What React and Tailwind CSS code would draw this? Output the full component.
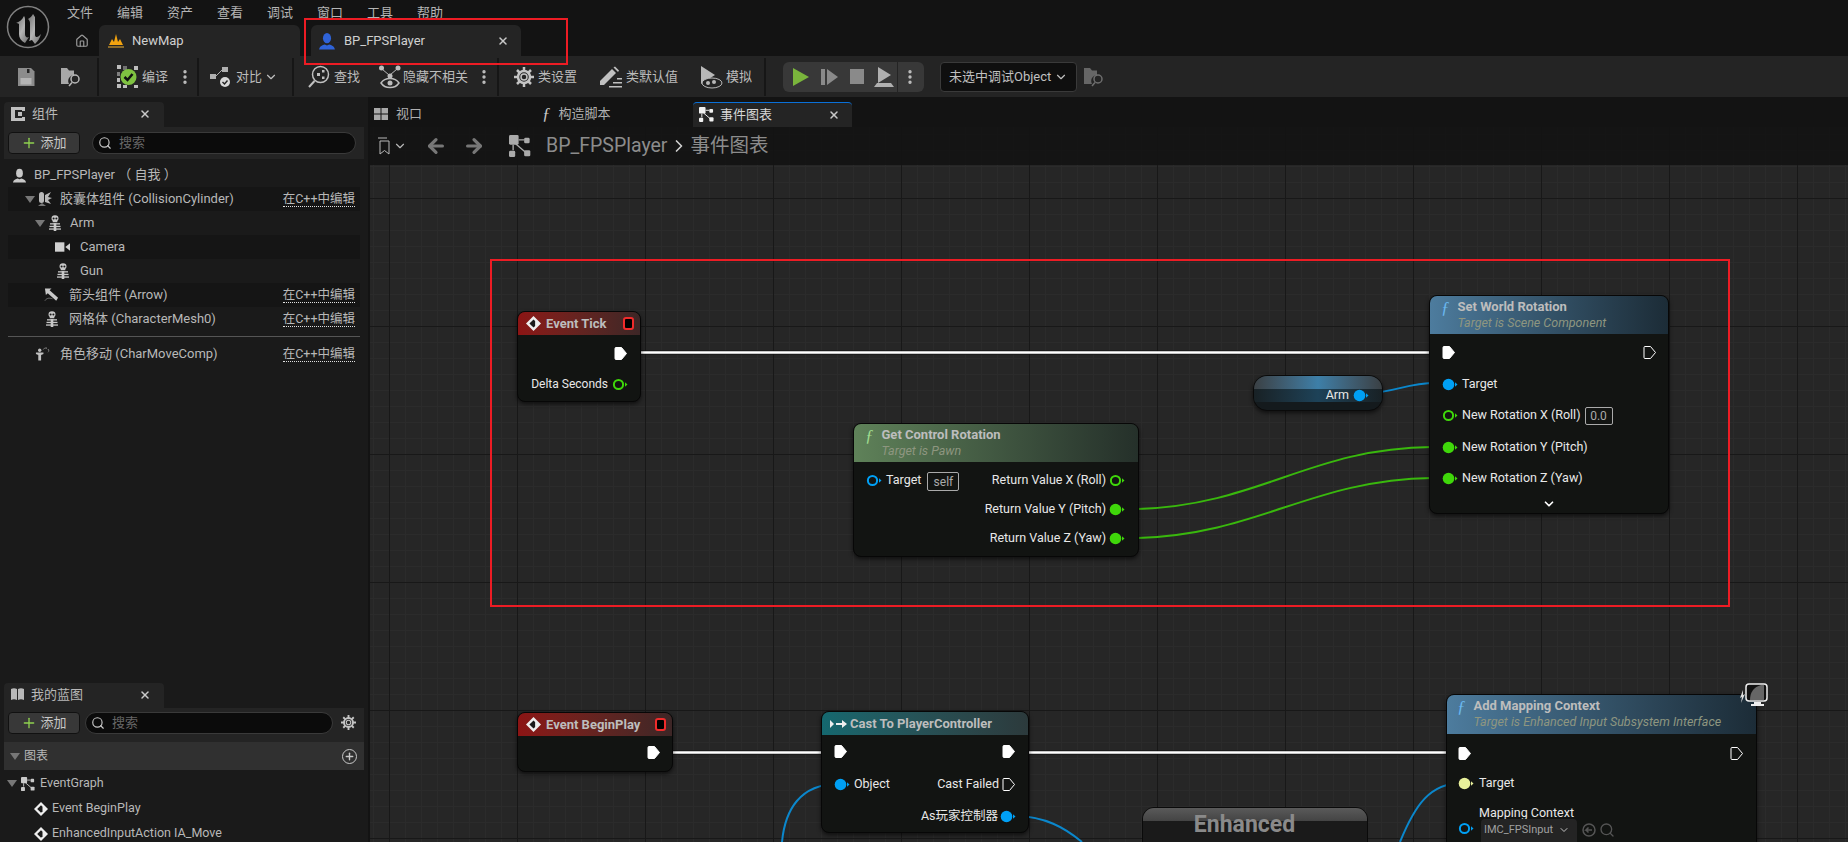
import React from 'react';
import { Plus, Search, X, ChevronDown, ChevronRight, Home, EllipsisVertical, ArrowLeft, ArrowRight } from 'lucide-react';

const Person = ({ color = '#c8c8c8', size = 16 }) => (
  <svg width={size} height={size} viewBox="0 0 16 16" fill={color}>
    <ellipse cx="8" cy="5.5" rx="3.6" ry="4.6" />
    <path d="M1 15.5c.5-3 3-4 5-4.4l2 1 2-1c2 .4 4.500 1.400 5 4.400z" />
  </svg>
);

const Skeleton = () => (
  <svg width="14" height="16" viewBox="0 0 14 16" fill="#c8c8c8">
    <path d="M3.500 3.500a3.500 3.200 0 0 1 7 0c0 1.300-.6 2-1.200 2.500v1.200H4.700V6c-.6-.5-1.200-1.200-1.200-2.500z" />
    <rect x="5.700" y="8" width="2.600" height="8" />
    <rect x="2" y="8.200" width="10" height="1.300" />
    <rect x="1.500" y="10.800" width="11" height="1.300" />
    <rect x="1" y="13.400" width="12" height="1.300" />
    <circle cx="5.600" cy="3.600" r="1" fill="#1a1a1a" />
    <circle cx="8.400" cy="3.600" r="1" fill="#1a1a1a" />
  </svg>
);

const GraphIcon = ({ size = 16, color = '#c8c8c8' }) => (
  <svg width={size} height={size} viewBox="0 0 16 16" fill={color}>
    <rect x="0" y="0" width="7" height="7" rx="1" />
    <rect x="11" y="2" width="4" height="4" rx="1" />
    <rect x="0" y="11.500" width="4.500" height="4.500" rx="1" />
    <rect x="11" y="11" width="4.500" height="4.500" rx="1" />
    <path d="M7 3.500h4M5 6.500l7 6M3 7v4" stroke={color} strokeWidth="1" />
  </svg>
);

const Diamond = ({ size = 14 }) => (
  <svg width={size} height={size} viewBox="0 0 14 14">
    <path d="M7 0l7 7-7 7-7-7z" fill="#eee" />
    <path d="M7 3.200L3.200 7 7 10.800l1.500-1.500V4.700z" fill="#1a1a1a" />
  </svg>
);

const Fn = ({ color }) => (
  <span className="text-[17px] italic font-['Liberation_Serif',serif] leading-none" style={{ color }}>
    ƒ
  </span>
);

const Exec = ({ filled = true }) => (
  <svg width="14" height="15" viewBox="0 0 14 15">
    <path
      d="M2 1.500h5.500L12.500 7.500l-5 6H2a1 1 0 0 1-1-1v-10a1 1 0 0 1 1-1z"
      fill={filled ? '#fff' : 'none'}
      stroke="#fff"
      strokeWidth="1"
    />
  </svg>
);

const Pin = ({ color, filled = true }) => (
  <svg width="16" height="13" viewBox="0 0 16 13" className="shrink-0">
    <circle cx="6.500" cy="6.500" r={filled ? 5.800 : 4.600} fill={filled ? color : 'none'} stroke={color} strokeWidth={filled ? 0 : 2} />
    <path d="M13 4.300L15.500 6.500 13 8.700z" fill={color} />
  </svg>
);

const Sep = () => <div className="w-0.5 h-[38px] bg-[#161616] shrink-0" />;

const Dots = () => <EllipsisVertical size={18} className="text-[#c0c0c0] shrink-0" strokeWidth={2.5} />;

const Label = ({ children, className = '' }) => (
  <span className={`text-[13px] text-[#bcbcbc] whitespace-nowrap ${className}`}>{children}</span>
);

const SaveIcon = () => (
  <svg width="20" height="20" viewBox="0 0 20 20" fill="#8c8c8c">
    <path d="M2 1h13l3.500 3.500V19H2z" />
    <rect x="11" y="2" width="2.500" height="4" fill="#242424" />
    <rect x="4.500" y="11" width="11" height="6.500" fill="#b4b4b4" />
  </svg>
);

const BrowseIcon = ({ dim }) => (
  <svg width="22" height="22" viewBox="0 0 22 22" className={dim ? 'opacity-50' : ''}>
    <path d="M1 2h6l2 2.500h5V9a6 6 0 0 0-5 9H1z" fill="#a8a8a8" />
    <circle cx="15" cy="13" r="4" fill="none" stroke="#b8b8b8" strokeWidth="1.500" />
    <path d="M12 16.500L9 20" stroke="#b8b8b8" strokeWidth="1.500" />
  </svg>
);

const CompileIcon = () => (
  <svg width="22" height="24" viewBox="0 0 22 24">
    <g fill="#bdbdbd">
      <rect x="0" y="0" width="4" height="4" />
      <rect x="6" y="1" width="4" height="4" fillOpacity="0.5" />
      <rect x="17" y="1" width="4" height="4" />
      <rect x="0" y="7" width="3" height="4" fillOpacity="0.6" />
      <rect x="0" y="13" width="3" height="4" />
      <rect x="0" y="19" width="4" height="4" />
      <rect x="6" y="20" width="4" height="3" />
      <rect x="17" y="20" width="4" height="3" />
    </g>
    <circle cx="11.500" cy="12" r="8" fill="#7fc241" />
    <path d="M7.500 12l3 3 5-6" stroke="#111" strokeWidth="2.500" fill="none" />
  </svg>
);

const DiffIcon = () => (
  <svg width="22" height="22" viewBox="0 0 22 22" fill="#b0b0b0">
    <rect x="0" y="8" width="6" height="5" />
    <rect x="12" y="1" width="6" height="5" />
    <path d="M6 10l6-6" stroke="#b0b0b0" />
    <circle cx="15" cy="16" r="5" fill="#d8d8d8" />
    <path d="M12.500 16l2 2 3-3.500" stroke="#222" strokeWidth="1.400" fill="none" />
  </svg>
);

const FindIcon = () => (
  <svg width="22" height="24" viewBox="0 0 22 24" fill="none" stroke="#c0c0c0" strokeWidth="1.500">
    <circle cx="12.500" cy="9.500" r="8" />
    <path d="M6.500 16L1 22" strokeWidth="2" />
    <rect x="9" y="8" width="3" height="3" fill="#c0c0c0" stroke="none" />
    <rect x="14" y="5" width="2.500" height="2.500" fill="#c0c0c0" stroke="none" />
    <rect x="14" y="11.500" width="2.500" height="2.500" fill="#c0c0c0" stroke="none" />
  </svg>
);

const HideIcon = () => (
  <svg width="22" height="24" viewBox="0 0 22 24" fill="#bdbdbd">
    <circle cx="2.500" cy="3" r="2.500" />
    <circle cx="19" cy="3" r="2.500" />
    <path d="M3 4l7 6M18 4l-7 6M11 10v3" stroke="#bdbdbd" fill="none" />
    <circle cx="11" cy="11" r="2.500" />
    <path d="M2 18c4-6 14-6 18 0-4 6-14 6-18 0z" fill="none" stroke="#bdbdbd" strokeWidth="1.500" />
    <circle cx="11" cy="18" r="2.500" />
  </svg>
);

const GearIcon = ({ size = 20 }) => (
  <svg width={size} height={size} viewBox="0 0 20 20" fill="none" stroke="#c4c4c4">
    <circle cx="10" cy="10" r="6" strokeWidth="2.500" />
    <circle cx="10" cy="10" r="3" strokeWidth="1.500" />
    <path
      d="M10 0v4M10 16v4M0 10h4M16 10h4M3 3l2.500 2.500M14.500 14.500L17 17M17 3l-2.500 2.500M5.500 14.500L3 17"
      strokeWidth="2.500"
    />
  </svg>
);

const PencilIcon = () => (
  <svg width="24" height="22" viewBox="0 0 24 22" fill="#c0c0c0">
    <path d="M1 15L13 3l4 4L5 19H1z" />
    <path d="M14.500 1.500l1.500-1 4 4-1 1.500z" />
    <path d="M10 20h13v1.500H10zM14 16h9v1.500h-9zM18 12h5v1.500h-5z" />
  </svg>
);

const SimIcon = () => (
  <svg width="24" height="24" viewBox="0 0 24 24" fill="#b8b8b8">
    <path d="M2 1l14 9-14 9z" />
    <ellipse cx="13" cy="18" rx="10" ry="5" fill="#242424" stroke="#b8b8b8" />
    <circle cx="9" cy="18" r="2" />
    <circle cx="15" cy="17" r="2" />
  </svg>
);

const UeLogo = () => (
  <svg width="44" height="44" viewBox="0 0 44 44">
    <defs>
      <linearGradient id="ue" x1="0" y1="0" x2="1" y2="1">
        <stop offset="0" stopColor="#6e6e6e" />
        <stop offset="0.5" stopColor="#b4b4b4" />
        <stop offset="1" stopColor="#6a6a6a" />
      </linearGradient>
    </defs>
    <circle cx="22" cy="22" r="20.500" fill="#0f0f0f" stroke="#808080" strokeWidth="1.500" />
    <path
      d="M10 18c3-1 6-3 8-7 1 1 1 3 1 5v13c0 3 2 4 4 3l-4 6c-4-2-6-5-6-9V19c-1-1-2-1-3-1z"
      fill="url(#ue)"
    />
    <path
      d="M22 14c2-1 4-3 5-5 1 1 1 2 2 3v18c0 2 2 3 4 1l2-2c-1 4-3 7-6 10l-3-4-3 1c1-1 1-3 1-5V18c0-2-1-3-2-4z"
      fill="url(#ue)"
    />
  </svg>
);

const ArrowIcon = () => (
  <svg width="16" height="14" viewBox="0 0 16 14" fill="#c8c8c8">
    <path d="M1 0h7L6 2l9 8-2 3-9-8-2 2z" />
    <path d="M1 13c2-3 5-3 8-2" stroke="#777" fill="none" />
  </svg>
);

const CapsuleIcon = () => (
  <svg width="15" height="16" viewBox="0 0 15 16" fill="#b8b8b8">
    <rect x="2" y="1" width="5" height="11" rx="2.500" />
    <path d="M8 4l6-3-3 5 4 1-4 2 3 4-6-2z" />
    <path d="M1 15l4-3 4 3z" fill="#777" />
  </svg>
);

const CamIcon = () => (
  <svg width="16" height="10" viewBox="0 0 16 10" fill="#d0d0d0">
    <rect x="0" y="0" width="10" height="10" />
    <path d="M11 5l5-4v8z" />
  </svg>
);

const MoveIcon = () => (
  <svg width="16" height="16" viewBox="0 0 16 16" fill="#c0c0c0">
    <circle cx="5" cy="4" r="1.800" />
    <path d="M1 6.500h8v1.500L6.500 9v6h-3V9L1 8z" />
    <path d="M9 3a3 3 0 0 1 4-1M14 3a2 2 0 0 1 0 3" stroke="#c0c0c0" strokeDasharray="1.500 1" fill="none" />
  </svg>
);

const tree = [
  { x: 'pl-[4px]', gap: 'ml-[7px]', icon: <Person size={15} />, text: 'BP_FPSPlayer （ 自我 ）' },
  { x: 'pl-[17px]', gap: 'ml-[8px]', caret: true, icon: <CapsuleIcon />, text: '胶囊体组件 (CollisionCylinder)', edit: true, dark: true },
  { x: 'pl-[27px]', gap: 'ml-[8px]', caret: true, icon: <Skeleton />, text: 'Arm' },
  { x: 'pl-[47px]', icon: <CamIcon />, text: 'Camera', dark: true },
  { x: 'pl-[47px]', icon: <Skeleton />, text: 'Gun' },
  { x: 'pl-[36px]', icon: <ArrowIcon />, text: '箭头组件 (Arrow)', edit: true, dark: true },
  { x: 'pl-[36px]', icon: <Skeleton />, text: '网格体 (CharacterMesh0)', edit: true },
];

const Caret = () => (
  <svg width="10" height="7" viewBox="0 0 10 7" className="shrink-0">
    <path d="M0 0h10L5 7z" fill="#777" />
  </svg>
);

const TreeRow = ({ row }) => (
  <div className={`h-[24px] flex items-center ${row.x} pr-[5px] ${row.dark ? 'bg-[#151515]' : ''}`}>
    {row.caret && (
      <span className="mr-[2px]">
        <Caret />
      </span>
    )}
    <span className="w-[15px] flex justify-center shrink-0">{row.icon}</span>
    <span className={`${row.gap || 'ml-[10px]'} text-[13px] text-[#b8b8b8] whitespace-nowrap`}>{row.text}</span>
    {row.edit && (
      <span className="ml-auto text-[12.500px] text-[#b8b8b8] border-b border-dotted border-[#e0e0e0] leading-[15px]">
        在C++中编辑
      </span>
    )}
  </div>
);

const AddButton = () => (
  <div className="w-[72px] h-[22px] bg-[#383838] border border-[#111] rounded flex items-center justify-center gap-[3px] shrink-0">
    <Plus size={16} className="text-[#8fd14f]" strokeWidth={2} />
    <span className="text-[13px] text-[#c8c8c8]">添加</span>
  </div>
);

const SearchBox = ({ className }) => (
  <div className={`h-[22px] bg-[#0b0b0b] border border-[#3a3a3a] rounded-full flex items-center pl-[5px] gap-[7px] ${className}`}>
    <Search size={14} className="text-[#c8c8c8]" />
    <span className="text-[13px] text-[#666]">搜索</span>
  </div>
);

const PanelTab = ({ icon, title }) => (
  <div className="w-[160px] h-[25px] ml-[4px] pb-[2px] bg-[#242424] rounded-t flex items-center pl-[6px] pr-[13px] gap-[6px] shrink-0">
    {icon}
    <span className="text-[13px] text-[#b8b8b8]">{title}</span>
    <X size={12} className="ml-auto text-[#c8c8c8]" strokeWidth={3} />
  </div>
);

const NodeTitle = ({ children }) => <div className="text-[13px] font-bold text-[#bdbdbd] leading-[16px] whitespace-nowrap">{children}</div>;

const NodeSub = ({ children }) => <div className="text-[12.500px] italic text-[#8e9680] leading-[16px] whitespace-nowrap">{children}</div>;

const NodeText = ({ children, className = '' }) => <span className={`text-[12.500px] text-[#e8e8e8] whitespace-nowrap ${className}`}>{children}</span>;

const nodeBox = 'absolute bg-[#121412] border border-[#070707] rounded-lg shadow-[0_2px_4px_rgba(0,0,0,0.6)] overflow-hidden';

const GREEN = '#3fd70a';
const BLUE = '#00a0f5';

const EventNode = ({ className, title }) => (
  <div className={`${nodeBox} ${className}`}>
    <div className="h-[23px] bg-linear-to-r from-[#8c1414] to-[#3d2626] flex items-center pl-[8px] pr-[6px] gap-[5px]">
      <Diamond size={15} />
      <NodeTitle>{title}</NodeTitle>
      <span className="ml-auto w-[11px] h-[13px] bg-black border-2 border-[#f02b2b] rounded-[3px]" />
    </div>
  </div>
);

export default function App() {
  return (
    <div className="relative w-[1848px] h-[842px] overflow-hidden bg-[#131313] font-['Roboto','Noto_Sans_CJK_SC',sans-serif] flex flex-col">
      {/* title bar */}
      <div className="h-[56px] flex shrink-0">
        <div className="w-[49px] pl-[6px] pt-[5px] shrink-0">
          <UeLogo />
        </div>
        <div className="flex-1 flex flex-col">
          <div className="h-[25px] flex items-center pl-[18px] gap-[24px] text-[13px] text-[#b4b4b4]">
            {['文件', '编辑', '资产', '查看', '调试', '窗口', '工具', '帮助'].map((m) => (
              <span key={m}>{m}</span>
            ))}
          </div>
          <div className="h-[31px] flex items-stretch">
            <div className="w-[50px] flex items-center justify-center">
              <Home size={14} className="text-[#9a9a9a] ml-[15px]" />
            </div>
            <div className="w-[201px] bg-[#242424] rounded-t-md flex items-center pl-[8px] gap-[7px]">
              <svg width="18" height="16" viewBox="0 0 18 16">
                <path d="M2 12l3-6 2 3 2-8 2 8 2-3 3 6z" fill="#f2a30f" />
                <rect x="1" y="13" width="16" height="2" fill="#8a6a2a" />
              </svg>
              <span className="text-[13px] text-[#d0d0d0]">NewMap</span>
            </div>
            <div className="w-[210px] ml-[11px] bg-[#242424] rounded-t-md flex items-center pl-[7px] pr-[12px] gap-[8px]">
              <Person color="#2f63d8" size={18} />
              <span className="text-[13px] text-[#d0d0d0]">BP_FPSPlayer</span>
              <X size={12} className="ml-auto text-[#c8c8c8]" strokeWidth={3} />
            </div>
          </div>
        </div>
      </div>

      {/* toolbar */}
      <div className="h-[41px] bg-[#242424] flex items-center shrink-0">
        <div className="w-[97px] pl-[16px] flex items-center gap-[24px] shrink-0">
          <SaveIcon />
          <BrowseIcon />
        </div>
        <Sep />
        <div className="w-[98px] pl-[18px] flex items-center gap-[3px] shrink-0">
          <CompileIcon />
          <Label>编译</Label>
          <span className="ml-[5px]">
            <Dots />
          </span>
        </div>
        <Sep />
        <div className="w-[93px] pl-[11px] flex items-center gap-[4px] shrink-0">
          <DiffIcon />
          <Label>对比</Label>
          <ChevronDown size={14} className="text-[#c0c0c0] -ml-[2px]" />
        </div>
        <Sep />
        <div className="w-[203px] pl-[14px] flex items-center shrink-0">
          <FindIcon />
          <Label className="ml-[4px]">查找</Label>
          <span className="ml-[19px]">
            <HideIcon />
          </span>
          <Label className="ml-[2px]">隐藏不相关</Label>
          <span className="ml-[7px]">
            <Dots />
          </span>
        </div>
        <Sep />
        <div className="w-[265px] pl-[15px] flex items-center shrink-0">
          <GearIcon />
          <Label className="ml-[4px]">类设置</Label>
          <span className="ml-[22px]">
            <PencilIcon />
          </span>
          <Label className="ml-[3px]">类默认值</Label>
          <span className="ml-[21px]">
            <SimIcon />
          </span>
          <Label className="ml-[3px]">模拟</Label>
        </div>
        <Sep />
        <div className="ml-[17px] w-[141px] h-[30px] bg-[#383838] rounded-md flex items-center pl-[9px] shrink-0">
          <svg width="18" height="18" viewBox="0 0 18 18">
            <path d="M1 0l16 9-16 9z" fill="#7ab53c" />
          </svg>
          <svg width="18" height="16" viewBox="0 0 18 16" className="ml-[11px]" fill="#8a8a8a">
            <rect x="0" y="0" width="4" height="16" />
            <path d="M6 0l11 8-11 8z" />
          </svg>
          <span className="ml-[11px] w-[14px] h-[15px] bg-[#8a8a8a]" />
          <svg width="20" height="20" viewBox="0 0 20 20" className="ml-[10px]" fill="#b0b0b0">
            <path d="M4 0l13 8-13 8z" />
            <path d="M0 20l3-4h14l3 4z" />
          </svg>
          <div className="ml-[3px] w-px h-[30px] bg-[#242424]" />
          <span className="ml-[3px]">
            <Dots />
          </span>
        </div>
        <div className="ml-[16px] w-[137px] h-[30px] bg-[#0f0f0f] border border-[#3a3a3a] rounded flex items-center pl-[8px] gap-[3px] shrink-0">
          <span className="text-[13px] text-[#c0c0c0] whitespace-nowrap">未选中调试Object</span>
          <ChevronDown size={14} className="text-[#c0c0c0]" />
        </div>
        <span className="ml-[6px]">
          <BrowseIcon dim />
        </span>
      </div>

      <div className="flex-1 flex min-h-0">
        {/* left column */}
        <div className="w-[368px] shrink-0 flex flex-col pt-[5px] bg-[#1a1a1a]">
          <PanelTab
            title="组件"
            icon={
              <svg width="16" height="16" viewBox="0 0 16 16" fill="#c0c0c0">
                <path d="M1 1h14v4h-3V4H5v8h7v-1h3v4H1z" />
                <rect x="8" y="6" width="4" height="4" />
              </svg>
            }
          />
          <div className="ml-[4px] mr-[4px] h-[32px] bg-[#242424] flex items-center pl-[4px] gap-[12px] shrink-0">
            <AddButton />
            <SearchBox className="w-[264px]" />
          </div>
          <div className="h-[524px] mx-[8px] pt-[4px] shrink-0 overflow-hidden">
            {tree.map((row) => (
              <TreeRow key={row.text} row={row} />
            ))}
            <div className="h-px bg-[#555] my-[5px]" />
            <TreeRow
              row={{ x: 'pl-[27px]', icon: <MoveIcon />, text: '角色移动 (CharMoveComp)', edit: true }}
            />
          </div>
          <PanelTab
            title="我的蓝图"
            icon={
              <svg width="15" height="14" viewBox="0 0 15 14" fill="#b8b8b8">
                <path d="M1 1c2-1 4-1 6 0v11c-2-1-4-1-6 0zM8 1c2-1 4-1 6 0v11c-2-1-4-1-6 0z" />
              </svg>
            }
          />
          <div className="mx-[4px] h-[34px] bg-[#242424] flex items-start pt-[4px] pl-[4px] gap-[5px] shrink-0">
            <AddButton />
            <SearchBox className="w-[248px]" />
            <span className="ml-[3px] mt-[3px]">
              <GearIcon size={15} />
            </span>
          </div>
          <div className="mx-[4px] h-[28px] bg-[#303030] flex items-center pl-[6px] pr-[7px] gap-[4px] shrink-0">
            <Caret />
            <span className="text-[12px] text-[#b8b8b8]">图表</span>
            <span className="ml-auto w-[15px] h-[15px] border border-[#c8c8c8] rounded-full flex items-center justify-center">
              <Plus size={11} className="text-[#c8c8c8]" strokeWidth={3} />
            </span>
          </div>
          <div className="mx-[4px] pt-[1px]">
            <div className="h-[25px] flex items-center pl-[3px] gap-[4px]">
              <Caret />
              <GraphIcon size={14} />
              <span className="ml-[1px] text-[12.500px] text-[#b8b8b8]">EventGraph</span>
            </div>
            {['Event BeginPlay', 'EnhancedInputAction IA_Move'].map((t) => (
              <div key={t} className="h-[25px] flex items-center pl-[30px] gap-[4px]">
                <Diamond size={14} />
                <span className="text-[12.500px] text-[#b8b8b8] whitespace-nowrap">{t}</span>
              </div>
            ))}
          </div>
        </div>

        {/* right column */}
        <div className="flex-1 flex flex-col min-w-0 ml-[2px]">
          <div className="h-[30px] pt-[5px] flex items-stretch shrink-0 bg-[#131313]">
            <div className="w-[137px] flex items-center pl-[4px] pb-[2px] gap-[8px]">
              <svg width="14" height="12" viewBox="0 0 14 12" fill="#a8a8a8">
                <rect x="0" y="0" width="6.500" height="5.500" />
                <rect x="7.500" y="0" width="6.500" height="5.500" />
                <rect x="0" y="6.500" width="6.500" height="5.500" />
                <rect x="7.500" y="6.500" width="6.500" height="5.500" />
              </svg>
              <span className="text-[13px] text-[#b0b0b0]">视口</span>
            </div>
            <div className="w-[186px] flex items-center pl-[35px] pb-[2px] gap-[8px]">
              <Fn color="#c8c8c8" />
              <span className="text-[13px] text-[#b0b0b0]">构造脚本</span>
            </div>
            <div className="w-[159px] bg-[#242424] border-t border-[#0a70d8] rounded-t flex items-center pl-[6px] pr-[12px] pb-[1px] gap-[6px]">
              <GraphIcon size={15} color="#f0f0f0" />
              <span className="text-[13px] text-[#d8d8d8]">事件图表</span>
              <X size={12} className="ml-auto text-[#c8c8c8]" strokeWidth={3} />
            </div>
          </div>

          {/* graph canvas, nodes sit on it at their own coordinates */}
          <div className="relative flex-1 overflow-hidden bg-[#262626]">
            <svg className="absolute left-0 top-0" width="1478" height="715" viewBox="370 127 1478 715">
              <defs>
                <pattern id="minor" x="5" y="6" width="16" height="16" patternUnits="userSpaceOnUse">
                  <path d="M0.500 0V16M0 0.500H16" stroke="#2b2b2b" strokeWidth="1" fill="none" />
                </pattern>
                <pattern id="major" x="517" y="198" width="128" height="128" patternUnits="userSpaceOnUse">
                  <path d="M0.500 0V128M0 0.500H128" stroke="#181818" strokeWidth="1" fill="none" />
                </pattern>
              </defs>
              <rect x="370" y="127" width="1478" height="715" fill="url(#minor)" />
              <rect x="370" y="127" width="1478" height="715" fill="url(#major)" />
              <g fill="none">
                <path d="M640 352.500H1430" stroke="#111" strokeOpacity="0.5" strokeWidth="5" />
                <path d="M640 352.500H1430" stroke="#fff" strokeWidth="2.500" />
                <path d="M672 752.500H822M1028 752.500H1448" stroke="#111" strokeOpacity="0.5" strokeWidth="5" />
                <path d="M672 752.500H822M1028 752.500H1448" stroke="#fff" strokeWidth="2.500" />
                <path d="M1138 509C1260 505 1310 448 1432 447M1138 538C1260 534 1310 480 1432 478" stroke="#39b80d" strokeWidth="2" />
                <path d="M1366 393C1395 393 1405 383 1436 383" stroke="#0b87cc" strokeWidth="2" />
                <path d="M838 784C800 784 785 810 782 842M1014 816C1045 816 1065 828 1082 842M1462 783C1430 783 1415 805 1400 842" stroke="#0b87cc" strokeWidth="2" />
              </g>
            </svg>

            {/* breadcrumb */}
            <div className="absolute left-0 top-0 right-0 h-[38px] pb-[1px] bg-[#131313]/90 flex items-center">
              <svg width="14" height="18" viewBox="0 0 14 18" fill="none" stroke="#b8b8b8" className="ml-[7px]">
                <path d="M1 1h9M3 4h9v13l-4.500-3.500L3 17z" />
              </svg>
              <ChevronDown size={14} className="ml-[2px] text-[#b8b8b8]" />
              <ArrowLeft size={22} strokeWidth={3.500} className="ml-[18px] text-[#777]" />
              <ArrowRight size={22} strokeWidth={3.500} className="ml-[16px] text-[#777]" />
              <span className="ml-[24px]">
                <GraphIcon size={22} color="#aaa" />
              </span>
              <span className="ml-[15px] text-[19.500px] text-[#8c8c8c]">BP_FPSPlayer</span>
              <ChevronRight size={20} className="ml-[2px] text-[#d0d0d0]" />
              <span className="ml-[1px] text-[19.500px] text-[#8c8c8c]">事件图表</span>
            </div>

            {/* Event Tick */}
            <EventNode className="left-[147px] top-[184px] w-[124px] h-[91px]" title="Event Tick" />
            <div className="absolute left-[147px] top-[184px] w-[124px] h-[91px] pt-[27px] pr-[13px] flex flex-col items-end">
              <div className="h-[30px] flex items-center">
                <Exec />
              </div>
              <div className="h-[32px] flex items-center gap-[4px]">
                <NodeText className="text-[12px]!">Delta Seconds</NodeText>
                <Pin color={GREEN} filled={false} />
              </div>
            </div>

            {/* Get Control Rotation */}
            <div className={`${nodeBox} left-[483px] top-[296px] w-[286px] h-[134px]`}>
              <div className="h-[38px] bg-linear-to-r from-[#5f8259] to-[#25302a] flex pl-[11px] pt-[3px] gap-[8px]">
                <Fn color="#9fdc8f" />
                <div>
                  <NodeTitle>Get Control Rotation</NodeTitle>
                  <NodeSub>Target is Pawn</NodeSub>
                </div>
              </div>
              <div className="pt-[4px] pl-[12px] pr-[13px]">
                <div className="h-[29px] flex items-center">
                  <Pin color={BLUE} filled={false} />
                  <NodeText className="ml-[4px]">Target</NodeText>
                  <span className="ml-[6px] mt-[2px] w-[32px] h-[19px] border border-[#aaa] rounded-[2px] text-[12px] text-[#aaa] flex items-center justify-center">
                    self
                  </span>
                  <NodeText className="ml-auto mr-[3px]">Return Value X (Roll)</NodeText>
                  <Pin color={GREEN} filled={false} />
                </div>
                <div className="h-[29px] flex items-center justify-end gap-[3px]">
                  <NodeText>Return Value Y (Pitch)</NodeText>
                  <Pin color={GREEN} />
                </div>
                <div className="h-[29px] flex items-center justify-end gap-[3px]">
                  <NodeText>Return Value Z (Yaw)</NodeText>
                  <Pin color={GREEN} />
                </div>
              </div>
            </div>

            {/* Arm */}
            <div className="absolute left-[883px] top-[248px] w-[130px] h-[36px] rounded-[14px] border border-[#0a0a0a] bg-[#141a1d] overflow-hidden shadow-[0_2px_4px_rgba(0,0,0,0.6)]">
              <div className="h-[13px] bg-linear-to-r from-[#3a4044] via-[#3d7fa8] to-[#3a4044]" />
              <div className="h-[13px] bg-linear-to-r from-[#182125] via-[#1d4258] to-[#182125]" />
              <div className="absolute left-0 right-0 top-[4px] bottom-0 flex items-center justify-end pr-[13px] gap-[4px]">
                <NodeText>Arm</NodeText>
                <Pin color={BLUE} />
              </div>
            </div>

            {/* Set World Rotation */}
            <div className={`${nodeBox} left-[1059px] top-[168px] w-[240px] h-[219px]`}>
              <div className="h-[38px] bg-linear-to-r from-[#4d7c9e] to-[#1c2c37] flex pl-[11px] pt-[3px] gap-[8px]">
                <Fn color="#6ab8f0" />
                <div>
                  <NodeTitle>Set World Rotation</NodeTitle>
                  <NodeSub>Target is Scene Component</NodeSub>
                </div>
              </div>
              <div className="pt-[3px] pl-[12px] pr-[11px]">
                <div className="h-[31.500px] flex items-center justify-between">
                  <Exec />
                  <Exec filled={false} />
                </div>
                <div className="h-[31.500px] flex items-center gap-[4px]">
                  <Pin color={BLUE} />
                  <NodeText>Target</NodeText>
                </div>
                <div className="h-[31.500px] flex items-center gap-[4px]">
                  <Pin color={GREEN} filled={false} />
                  <NodeText>New Rotation X (Roll)</NodeText>
                  <span className="w-[28px] h-[18px] border border-[#aaa] rounded-[2px] text-[12px] text-[#aaa] flex items-center justify-center">
                    0.0
                  </span>
                </div>
                <div className="h-[31.500px] flex items-center gap-[4px]">
                  <Pin color={GREEN} />
                  <NodeText>New Rotation Y (Pitch)</NodeText>
                </div>
                <div className="h-[31.500px] flex items-center gap-[4px]">
                  <Pin color={GREEN} />
                  <NodeText>New Rotation Z (Yaw)</NodeText>
                </div>
                <div className="flex justify-center pt-[2px] pr-[1px]">
                  <ChevronDown size={14} strokeWidth={3} className="text-white" />
                </div>
              </div>
            </div>

            {/* Event BeginPlay */}
            <EventNode className="left-[147px] top-[585px] w-[156px] h-[60px]" title="Event BeginPlay" />
            <div className="absolute left-[277px] top-[618px]">
              <Exec />
            </div>

            {/* Cast */}
            <div className={`${nodeBox} left-[451px] top-[584px] w-[208px] h-[122px]`}>
              <div className="h-[23px] bg-linear-to-r from-[#14686f] to-[#2c3a3c] flex items-center pl-[8px] gap-[2px]">
                <svg width="18" height="10" viewBox="0 0 18 10" fill="#eee">
                  <path d="M0 1l4 4-4 4zM6 4h6V1l5 4-5 4V6H6z" />
                </svg>
                <NodeTitle>Cast To PlayerController</NodeTitle>
              </div>
              <div className="pl-[12px] pr-[12px]">
                <div className="h-[31px] flex items-center justify-between pt-[1px]">
                  <Exec />
                  <Exec />
                </div>
                <div className="h-[32px] mt-[2px] flex items-center">
                  <Pin color={BLUE} />
                  <NodeText className="ml-[4px]">Object</NodeText>
                  <NodeText className="ml-auto mr-[3px]">Cast Failed</NodeText>
                  <Exec filled={false} />
                </div>
                <div className="h-[31px] mt-[1px] flex items-center justify-end gap-[2px]">
                  <NodeText>As玩家控制器</NodeText>
                  <Pin color={BLUE} />
                </div>
              </div>
            </div>

            {/* Enhanced */}
            <div className="absolute left-[772px] top-[680px] w-[226px] h-[200px] rounded-[12px] border border-[#0a0a0a] bg-[#1a1a1a] overflow-hidden">
              <div className="absolute left-0 right-0 top-0 h-[13px] bg-linear-to-b from-[#5a5a5a] to-[#444]" />
              <div className="relative flex justify-center pt-[3px] pr-[21px] text-[23px] leading-[28px] font-bold text-[#8a8a8a]">Enhanced</div>
            </div>

            {/* Add Mapping Context */}
            <div className={`${nodeBox} left-[1076px] top-[567px] w-[311px] h-[320px]`}>
              <div className="h-[39px] bg-linear-to-r from-[#4d7c9e] to-[#1c2c37] flex pl-[10px] pt-[3px] gap-[8px]">
                <Fn color="#6ab8f0" />
                <div>
                  <NodeTitle>Add Mapping Context</NodeTitle>
                  <NodeSub>Target is Enhanced Input Subsystem Interface</NodeSub>
                </div>
              </div>
              <div className="pl-[11px] pr-[12px]">
                <div className="h-[38px] flex items-center justify-between">
                  <Exec />
                  <Exec filled={false} />
                </div>
                <div className="h-[23px] flex items-center gap-[5px]">
                  <Pin color="#e8f09a" />
                  <NodeText>Target</NodeText>
                </div>
                <div className="ml-[21px] mt-[9px] h-[18px] flex items-center">
                  <NodeText>Mapping Context</NodeText>
                </div>
                <div className="flex items-start">
                  <Pin color={BLUE} filled={false} />
                  <div className="ml-[7px] mt-[-3px] w-[96px] h-[30px] bg-[#242424] rounded flex items-start pt-[3px] pl-[3px] gap-[5px]">
                    <span className="text-[11px] text-[#a0a0a0] whitespace-nowrap">IMC_FPSInput</span>
                    <ChevronDown size={12} className="text-[#c0c0c0] mt-[2px]" />
                  </div>
                  <svg width="16" height="16" viewBox="0 0 16 16" fill="none" stroke="#555" strokeWidth="1.500" className="ml-[4px]">
                    <circle cx="8" cy="8" r="6" />
                    <path d="M11 8H5l2.500-2.500M5 8l2.500 2.500" />
                  </svg>
                  <Search size={16} className="ml-[2px] text-[#555]" />
                </div>
              </div>
            </div>

            {/* network icon over the node corner */}
            <svg width="28" height="26" viewBox="0 0 28 26" className="absolute left-[1370px] top-[555px]">
              <path d="M3 8L0 16l2-1-1 6 4-9-2 1z" fill="#ddd" />
              <rect x="6" y="2" width="21" height="17" rx="3" fill="#111" stroke="#eee" strokeWidth="1.500" />
              <path d="M10 18c0-8 4-13 11-15h3v15z" fill="#666" />
              <path d="M14 20h7v2h3v2H11v-2h3z" fill="#eee" />
            </svg>

            {/* annotation box */}
            <div className="absolute left-[120px] top-[132px] w-[1240px] h-[348px] border-2 border-[#ed1c24] pointer-events-none" />
          </div>
        </div>
      </div>

      {/* annotation box round the tab */}
      <div className="absolute left-[304px] top-[18px] w-[264px] h-[47px] border-2 border-[#ed1c24] pointer-events-none" />
    </div>
  );
}
